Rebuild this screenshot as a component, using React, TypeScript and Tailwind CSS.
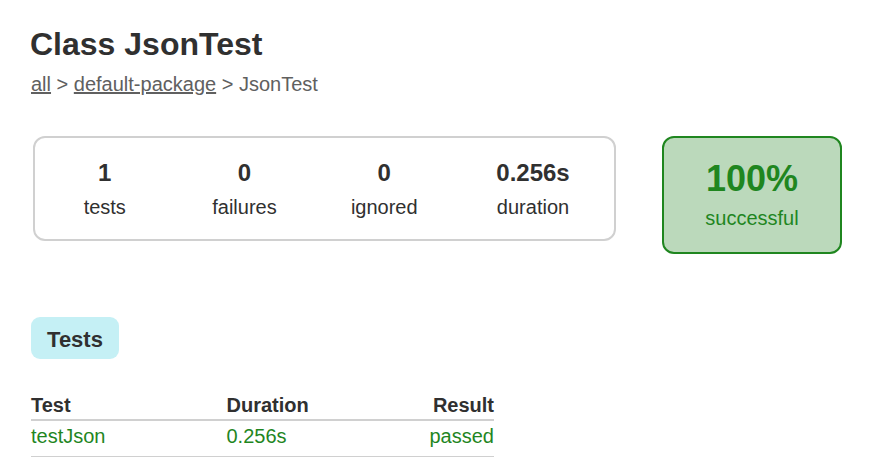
import React from "react";

export default function App() {
  return (
    <div className="w-[871px] h-[471px] overflow-hidden bg-white pl-[31px] pt-[26px] font-['Liberation_Sans',Arial,sans-serif] text-[#303030]">
      <h1 className="-ml-[1px] text-[32px] font-bold leading-[36px]">Class JsonTest</h1>
      <div className="mt-[10.5px] text-[20px] leading-[23px] text-[#606060]">
        <a className="underline">all</a> &gt; <a className="underline">default-package</a> &gt; JsonTest
      </div>

      <div className="mt-[40.5px] flex items-start">
        <div className="ml-[2px] flex h-[105px] w-[583px] gap-[2px] rounded-[12px] border-2 border-[#d0d0d0] pl-[1px] pr-[2px] pt-[20.75px] text-center">
          {[
            ["1", "tests", "w-[137.5px]"],
            ["0", "failures", "w-[138px]"],
            ["0", "ignored", "w-[137.5px]"],
            ["0.256s", "duration", "w-[156px]"],
          ].map(([v, l, w], i) => (
            <div key={i} className={w}>
              <div className="mb-[10px] text-[24px] font-bold leading-[27.6px]">{v}</div>
              <div className="text-[20px] leading-[23px]">{l}</div>
            </div>
          ))}
        </div>
        <div className="ml-[46px] h-[118px] w-[180px] rounded-[12px] border-2 border-[#1f861f] bg-[#bbd9bb] pt-[19.5px] text-center text-[#1f861f]">
          <div className="mb-[8.5px] text-[36px] font-bold leading-[41px]">100%</div>
          <div className="text-[20px] leading-[23px]">successful</div>
        </div>
      </div>

      <div className="mt-[63px] flex h-[42px] w-[88px] justify-center rounded-[9px] bg-[#c5f0f5] pt-[9.8px]">
        <h2 className="text-[22px] font-bold leading-[25px]">Tests</h2>
      </div>

      <div className="mt-[34.5px] w-[463px] text-[20px] leading-[23px]">
        <div className="grid grid-cols-[195.5px_1fr_90px] border-b-2 border-[#d0d0d0] pb-[2px] font-bold">
          <div>Test</div>
          <div>Duration</div>
          <div className="text-right">Result</div>
        </div>
        <div className="grid grid-cols-[195.5px_1fr_90px] border-b border-[#d0d0d0] pb-[7.5px] pt-[4.5px] text-[#1f861f]">
          <div>testJson</div>
          <div>0.256s</div>
          <div className="text-right">passed</div>
        </div>
      </div>
    </div>
  );
}
